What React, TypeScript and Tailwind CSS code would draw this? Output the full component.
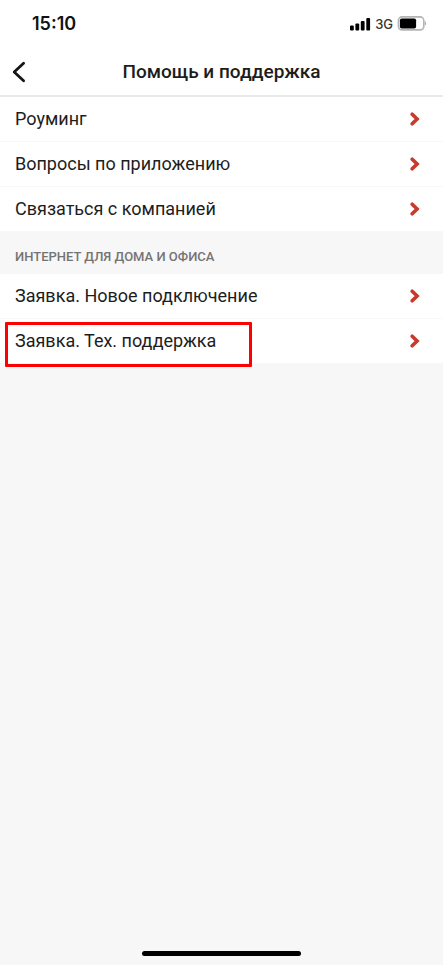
interface MenuItem {
  label: string;
  highlighted?: boolean;
}

const SUPPORT_ITEMS: MenuItem[] = [
  { label: 'Роуминг' },
  { label: 'Вопросы по приложению' },
  { label: 'Связаться с компанией' },
];

const INTERNET_ITEMS: MenuItem[] = [
  { label: 'Заявка. Новое подключение' },
  { label: 'Заявка. Тех. поддержка', highlighted: true },
];

function StatusBar() {
  return (
    <div className="flex h-12 items-center justify-between pl-8 pr-4 font-['Inter',sans-serif]">
      <span className="text-lg font-semibold leading-6 text-[#111111]">15:10</span>
      <div className="flex items-center gap-1">
        <svg className="h-3.5 w-[22px]" viewBox="0 0 22 14" fill="#000">
          <rect x="1" y="8.5" width="3.8" height="5" rx="1" />
          <rect x="6.4" y="6.5" width="3.8" height="7" rx="1" />
          <rect x="11.8" y="4" width="3.8" height="9.5" rx="1" />
          <rect x="17.3" y="1" width="3.8" height="12.5" rx="1" />
        </svg>
        <span className="text-[13px] font-medium leading-4 text-[#333333]">3G</span>
        <svg className="h-4 w-[30px]" viewBox="0 0 30 16">
          <rect x="1.4" y="0.9" width="25.4" height="13" rx="3.6" fill="#fff" stroke="#b4b4b4" strokeWidth="1.6" />
          <rect x="2.9" y="2.5" width="16.2" height="10" rx="1.8" fill="#000" />
          <path d="M27.9 5.3c1.5.5 1.5 3.9 0 4.4z" fill="#a8a8a8" />
        </svg>
      </div>
    </div>
  );
}

function MenuList({ items }: { items: MenuItem[] }) {
  return (
    <ul className="bg-white">
      {items.map((item) => (
        <li key={item.label} className="relative border-b border-[#f8f8f8]">
          <a href="#" className="flex items-center justify-between py-[11px] pl-[15px] pr-[23px]">
            <span className="text-lg leading-[22px] text-[#1d1d1d]">{item.label}</span>
            <svg className="h-3.5 w-2.5" viewBox="0 0 10 14" fill="none">
              <path d="M2.2 2.2 7.1 7 2.2 11.8" stroke="#c9392d" strokeWidth="3.6" strokeLinecap="round" />
            </svg>
          </a>
          {item.highlighted && (
            <div className="pointer-events-none absolute -bottom-1 left-[5px] top-[3px] w-[247px] rounded-[1px] border-[3px] border-[#ff0000]" />
          )}
        </li>
      ))}
    </ul>
  );
}

export default function App() {
  return (
    <div className="flex min-h-screen flex-col bg-[#f7f7f7] font-['Roboto','Liberation_Sans',sans-serif]">
      <header className="border-b-2 border-[#e8e8e8] bg-white">
        <StatusBar />
        <div className="grid h-[47px] grid-cols-[1fr_auto_1fr] items-center">
          <button type="button" aria-label="Назад" className="ml-3 w-fit">
            <svg className="h-[22px] w-3.5" viewBox="0 0 14 22" fill="none">
              <path d="M11.6 2.2 2.2 11l9.4 8.8" stroke="#161616" strokeWidth="2.8" strokeLinecap="round" strokeLinejoin="round" />
            </svg>
          </button>
          <h1 className="text-[19px] font-medium leading-6 text-[#1d1d1d]">Помощь и поддержка</h1>
        </div>
      </header>

      <main className="flex-1">
        <MenuList items={SUPPORT_ITEMS} />
        <h2 className="px-[15px] pb-2 pt-4 text-[13px] font-medium leading-[18px] text-[#747474]">
          ИНТЕРНЕТ ДЛЯ ДОМА И ОФИСА
        </h2>
        <MenuList items={INTERNET_ITEMS} />
      </main>

      <div className="mx-auto mb-[9px] h-[5px] w-[36%] rounded-full bg-black" />
    </div>
  );
}
